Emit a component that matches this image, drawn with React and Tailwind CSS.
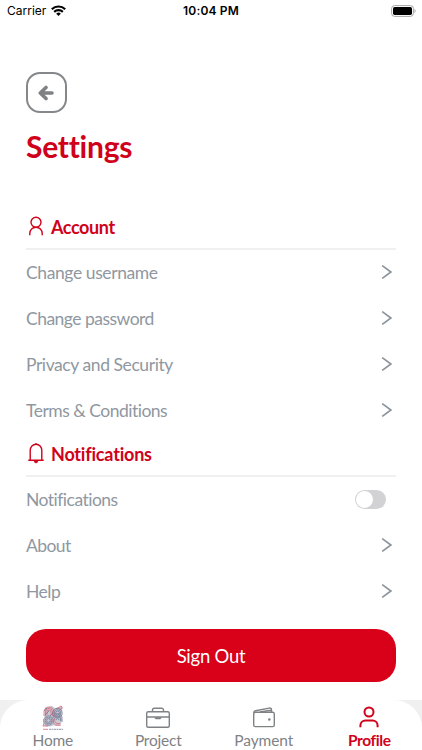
import React, { useState } from 'react';

const Chevron = () => (
  <svg className="mr-[4px] mb-px h-[14px] w-[11px]" viewBox="0 0 11 14" fill="none" stroke="#8b949d" strokeWidth="1.6">
    <path d="M1.2 .6 9.9 7 1.2 13.4" />
  </svg>
);

const UserIcon = () => (
  <svg className="mb-[2px] h-[20px] w-[20px]" viewBox="0 0 20 20" fill="none" stroke="#d0021b" strokeWidth="1.4">
    <circle cx="10" cy="6.2" r="5" />
    <path d="M3.8 19.2v-1.7a6.2 6.2 0 0 1 12.4 0v1.7" />
  </svg>
);

const BellIcon = () => (
  <svg className="mb-[2px] h-[22px] w-[20px]" viewBox="0 0 20 22" fill="none" stroke="#d0021b" strokeWidth="1.4">
    <path d="M2.3 18.2h15.4M4.2 18V8.6a5.8 6.4 0 0 1 11.6 0V18M10 2.2V.9" />
    <path d="M8.4 18.6h3.2v1a1.6 1.2 0 0 1-3.2 0z" fill="#d0021b" strokeWidth=".8" />
  </svg>
);

const HomeLogo = () => (
  <svg className="h-[26px] w-[24px]" viewBox="0 0 24 26" fill="none" strokeWidth=".8">
    <path d="M4 2.5 11 1l3 2 4-.5L20.5.5l1 3-1 6 .8 6-3 5.5-6-.5-3 1-6.500-.5L4.300 16l-1-5z" fill="#c9c9d4" />
    <g stroke="#d96a78">
      <path d="M3 11V7a5 5 0 0 1 10 0v5M4.5 11V7a3.500 3.500 0 0 1 7 0v4M6 10V7a2 2 0 0 1 4 0v3" />
      <path d="m15 4 5-3 1.500 2-3.500 2M3 14v4l-1 3h5M12 14c0 5 2 7 8 6M13.500 14c0 4 2 5 6 4.500" />
    </g>
    <g stroke="#737b94">
      <circle cx="16.5" cy="8" r="4.7" />
      <circle cx="16.5" cy="8" r="3.3" />
      <circle cx="16.5" cy="8" r="1.9" />
      <circle cx="7.5" cy="15.5" r="4.7" />
      <circle cx="7.5" cy="15.5" r="3.3" />
      <circle cx="7.5" cy="15.5" r="1.9" />
      <path d="M12 13a4.500 4.500 0 0 1 9 0v4M13.500 14a3 3 0 0 1 6 0v2M15 15a1.500 1.500 0 0 1 3 0M3 6l3-3m-2 7 4-4m1 5 3-3" />
    </g>
    <path d="M2 24.300h5" stroke="#d96a78" />
    <path d="M8 24.300h14" stroke="#737b94" strokeDasharray="2 .5" />
  </svg>
);

const BriefcaseIcon = () => (
  <svg className="h-[26px] w-[26px]" viewBox="0 0 26 26" fill="none" stroke="#7f8285" strokeWidth="1.4" strokeLinejoin="round">
    <rect x="1.7" y="6.7" width="22.6" height="15.6" rx="1.5" />
    <path d="M7.5 6.7V5a1.8 1.8 0 0 1 1.8-1.8h7.4A1.8 1.8 0 0 1 18.5 5v1.7M1.7 12h22.6" />
    <path d="M9.5 12.3h7v.7l-1.200 1.200h-4.600L9.5 13z" fill="#7f8285" stroke="none" />
  </svg>
);

const WalletIcon = () => (
  <svg className="h-[26px] w-[26px]" viewBox="0 0 26 26" fill="none" stroke="#7f8285" strokeWidth="1.4" strokeLinejoin="round">
    <rect x="2.7" y="7.3" width="20.6" height="14.3" rx="1.7" />
    <path d="M3 8.300c-.4-1.400.2-2.200 1.500-2.500l13.700-2.700c1.400-.3 2.300.4 2.300 1.700v2.300M9 7l11-1.800" />
    <circle cx="18.3" cy="14.5" r="1.3" fill="#7f8285" stroke="none" />
  </svg>
);

const ProfileIcon = () => (
  <svg className="h-[26px] w-[26px]" viewBox="0 0 26 26" fill="none" stroke="#d0021b" strokeWidth="2">
    <circle cx="13" cy="7" r="4.5" />
    <path d="M4.400 22.300v-1.800a5 5 0 0 1 5-5h7.200a5 5 0 0 1 5 5v1.800" />
  </svg>
);

const accountItems = [
  { label: 'Change username', spacing: 'tracking-[-0.4px]' },
  { label: 'Change password', spacing: 'tracking-[-0.52px]' },
  { label: 'Privacy and Security', spacing: 'tracking-[-0.42px]' },
  { label: 'Terms & Conditions', spacing: 'tracking-[-0.5px]' },
];

const moreItems = [
  { label: 'About', spacing: 'tracking-[-0.6px]' },
  { label: 'Help', spacing: 'tracking-[-0.5px]' },
];

const tabs = [
  { label: 'Home', Icon: HomeLogo, style: 'text-[#7f8285] tracking-[-0.2px]' },
  { label: 'Project', Icon: BriefcaseIcon, style: 'text-[#7f8285] tracking-[-0.2px]' },
  { label: 'Payment', Icon: WalletIcon, style: 'text-[#7f8285] tracking-[-0.1px]' },
  { label: 'Profile', Icon: ProfileIcon, style: 'font-bold text-[#d0021b] tracking-[-0.4px]' },
];

const Row = ({ label, spacing, children }) => (
  <div className="flex h-[46px] items-center justify-between text-[17.5px] text-[#8f98a1]">
    <span className={`pt-[2px] ${spacing}`}>{label}</span>
    {children || <Chevron />}
  </div>
);

const SectionTitle = ({ icon, spacing, children }) => (
  <div className="flex h-[43px] items-center gap-[5px] border-b-2 border-[#f0f0f0] text-[18px] font-bold text-[#d0021b]">
    {icon}
    <h2 className={spacing}>{children}</h2>
  </div>
);

const StatusBar = () => (
  <div className="grid h-[22px] grid-cols-3 items-center font-['Inter',sans-serif] text-[12px] text-black">
    <div className="flex items-center gap-[5px] pl-[7px]">
      <span>Carrier</span>
      <svg className="mb-px h-[11px] w-[15px]" viewBox="0 0 15 11" fill="none" stroke="black" strokeWidth="2.2">
        <path d="M.8 4.200a9.600 9.600 0 0 1 13.400 0M3.200 6.900a6.200 6.200 0 0 1 8.600 0" />
        <path d="M7.500 11 5.200 8.700a3.300 3.300 0 0 1 4.600 0z" fill="black" stroke="none" />
      </svg>
    </div>
    <div className="text-center font-semibold tracking-[0.15px]">10:04 PM</div>
    <svg className="mr-[5px] mb-px h-[12px] w-[26px] justify-self-end" viewBox="0 0 26 12">
      <rect x=".6" y=".6" width="21.8" height="10.8" rx="3" fill="none" stroke="#a5a5a5" />
      <rect x="2" y="2" width="19" height="8" rx="1.7" />
      <path d="M23.500 4v4c1.500-.6 1.500-3.400 0-4" fill="#a5a5a5" />
    </svg>
  </div>
);

const App = () => {
  const [enabled, setEnabled] = useState(false);

  return (
    <div className="flex h-[750px] w-[422px] flex-col overflow-hidden bg-white font-['Lato',sans-serif]">
      <StatusBar />

      <main className="flex flex-1 flex-col px-[26px] pt-[49.5px]">
        <button className="flex h-[41px] w-[41px] items-center justify-center rounded-[14px] border-2 border-[#85888a]">
          <svg className="mt-[2px] mr-px h-[16px] w-[16px]" viewBox="0 0 16 16" fill="none" stroke="#7f8285" strokeWidth="3.6" strokeLinecap="round" strokeLinejoin="round">
            <path d="M14 8H2.300M8 2.500 2.300 8 8 13.500" />
          </svg>
        </button>
        <h1 className="mt-[13.500px] h-[40px] text-[30px] leading-[40px] font-bold tracking-[-0.25px] text-[#d0021b]">Settings</h1>

        <section className="mt-[40.5px]">
          <SectionTitle icon={<UserIcon />} spacing="tracking-[-0.4px]">Account</SectionTitle>
          {accountItems.map((item) => <Row key={item.label} {...item} />)}
        </section>

        <section>
          <SectionTitle icon={<BellIcon />} spacing="tracking-[-0.2px]">Notifications</SectionTitle>
          <Row label="Notifications" spacing="tracking-[-0.52px]">
            <button onClick={() => setEnabled(!enabled)} className={`mr-[10px] flex h-[19px] w-[31px] rounded-full bg-[#d2d2d5] p-px ${enabled ? 'justify-end' : 'justify-start'}`}>
              <span className="h-[17px] w-[17px] rounded-full bg-white" />
            </button>
          </Row>
          {moreItems.map((item) => <Row key={item.label} {...item} />)}
        </section>

        <button className="mt-[14.5px] h-[53px] rounded-[20px] bg-[#d90019] pt-[2px] text-[18.5px] tracking-[-0.25px] text-white">Sign Out</button>
      </main>

      <div className="bg-[#f0f0f0]">
        <nav className="grid h-[50px] grid-cols-4 rounded-t-[28px] bg-white pt-[5px]">
          {tabs.map(({ label, Icon, style }) => (
            <div key={label} className={`flex flex-col items-center text-[15.5px] leading-[19px] ${style}`}>
              <Icon />
              <span>{label}</span>
            </div>
          ))}
        </nav>
      </div>
    </div>
  );
};

export default App;
